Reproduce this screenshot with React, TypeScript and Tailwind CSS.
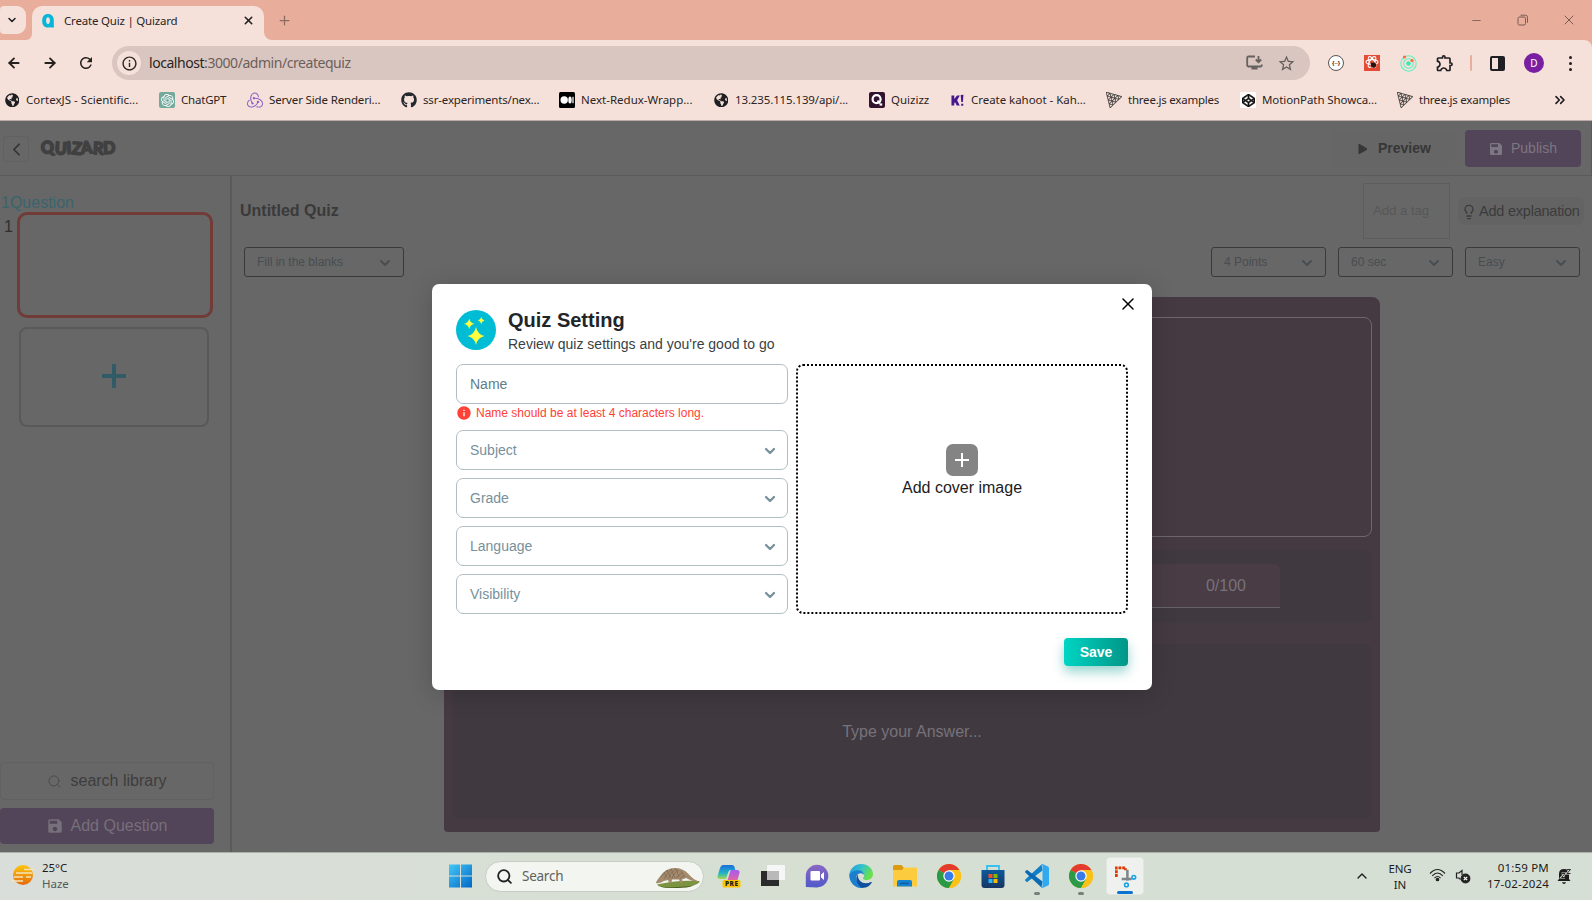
import React from 'react';
import { ArrowLeft, ArrowRight, ChevronDown, ChevronLeft, ChevronUp, ChevronsRight, Lightbulb, Minus, Plus, Search, X } from 'lucide-react';
import { FaCodepen, FaGithub, FaGlobeAmericas } from 'react-icons/fa';
import { SiOpenai, SiRedux, SiThreedotjs } from 'react-icons/si';
import { MdRefresh, MdOutlineInfo, MdOutlineExtension, MdStarBorder, MdSave, MdInfo } from 'react-icons/md';

const segoe = "font-['Noto_Sans',sans-serif]";

function MediumMark() {
  return (
    <svg width="16" height="16" viewBox="0 0 16 16">
      <rect width="16" height="16" rx="1.5" fill="#000" />
      <circle cx="5.2" cy="8" r="3.7" fill="#fff" />
      <ellipse cx="11" cy="8" rx="1.7" ry="3.6" fill="#fff" />
      <rect x="13.4" y="4.8" width="1.2" height="6.4" fill="#fff" />
    </svg>
  );
}

function QuizizzMark() {
  return (
    <svg width="16" height="16" viewBox="0 0 16 16">
      <rect width="16" height="16" rx="2" fill="#32122f" />
      <circle cx="7.6" cy="7.2" r="4" fill="none" stroke="#fff" strokeWidth="2.2" />
      <path d="M8.500 8.500l2.500 3" stroke="#fff" strokeWidth="1.800" />
      <rect x="10.600" y="11.400" width="2.600" height="2.200" fill="#fff" />
    </svg>
  );
}

function KahootMark() {
  return (
    <svg width="13" height="13" viewBox="0 0 14 14" fill="#46178f">
      <path d="M0.5 1.5h3v4l3-4h3L6.6 6.8 9.4 12.5H6.2L4.4 9 3.5 10v2.5h-3zM10.4 1l3-.3-.6 8h-1.7zM11 10.4h2.2v2.2H11z" />
    </svg>
  );
}

const bookmarks: { icon: React.ReactNode; label: string; w: string }[] = [
  { icon: <FaGlobeAmericas size={14.5} color="#1f1f23" />, label: 'CortexJS - Scientific...', w: 'w-[155px] tracking-[0.02px]' },
  { icon: <span className="flex size-4 items-center justify-center rounded-[2px] bg-[#74aa9c]"><SiOpenai size={13} color="#fff" /></span>, label: 'ChatGPT', w: 'w-[88px] tracking-[-0.2px]' },
  { icon: <SiRedux size={16} color="#8a5cc4" />, label: 'Server Side Renderi...', w: 'w-[154px] tracking-[-0.15px]' },
  { icon: <FaGithub size={16} color="#24292f" />, label: 'ssr-experiments/nex...', w: 'w-[158px] tracking-[-0.17px]' },
  { icon: <MediumMark />, label: 'Next-Redux-Wrapp...', w: 'w-[154px] tracking-[0px]' },
  { icon: <FaGlobeAmericas size={14.5} color="#1f1f23" />, label: '13.235.115.139/api/...', w: 'w-[156px] tracking-[-0.13px]' },
  { icon: <QuizizzMark />, label: 'Quizizz', w: 'w-[80px] tracking-[0px]' },
  { icon: <KahootMark />, label: 'Create kahoot - Kah...', w: 'w-[157px] tracking-[-0.04px]' },
  { icon: <SiThreedotjs size={16} color="#2b2b2b" className="stroke-[#2b2b2b] stroke-[0.5]" />, label: 'three.js examples', w: 'w-[134px] tracking-[-0.22px]' },
  { icon: <span className="flex size-4 items-center justify-center rounded-[1px] bg-white"><FaCodepen size={13} color="#111" className="stroke-[#111] stroke-[24]" /></span>, label: 'MotionPath Showca...', w: 'w-[157px] tracking-[-0.08px]' },
  { icon: <SiThreedotjs size={16} color="#2b2b2b" className="stroke-[#2b2b2b] stroke-[0.5]" />, label: 'three.js examples', w: 'w-[134px] tracking-[-0.22px]' },
];

function TabStrip() {
  return (
    <div className="flex h-10 bg-[#e8ad9b]">
      <div className="mt-[6px] flex h-7 w-[26px] items-center justify-center rounded-r-[9px] rounded-l-[4px] bg-[#f6e1da]">
        <ChevronDown size={12} strokeWidth={3} color="#1f1f1f" className="-ml-[2px]" />
      </div>
      <div className="flex w-[6px] items-end bg-[#f6e1da]">
        <div className="h-full w-full rounded-br-[8px] bg-[#e8ad9b]" />
      </div>
      <div className="mt-[6px] flex h-[34px] w-[232px] items-center rounded-t-[10px] bg-[#f6e1da] pr-[9px] pl-[10px] pb-[5px]">
        <svg width="12" height="14" viewBox="0 0 12 14">
          <path d="M6 0C9.600 0 11.800 2.500 11.800 6.500V11L12 13.600H9L8 13.300C3 14.600 .2 11.500 .2 7 .2 2.500 2.400 0 6 0z" fill="#06b6d8" />
          <ellipse cx="6" cy="6.600" rx="1.900" ry="3.400" fill="#f6e1da" />
        </svg>
        <span className="ml-[10px] flex-1 text-[11.500px] tracking-[-0.2px] whitespace-nowrap text-[#2a2523]">Create Quiz | Quizard</span>
        <X size={13} strokeWidth={2.800} color="#1f1f1f" />
      </div>
      <div className="w-[8px] bg-[#f6e1da]">
        <div className="h-full w-full rounded-bl-[8px] bg-[#e8ad9b]" />
      </div>
      <Plus size={15} strokeWidth={2} color="#8d6d63" className="mt-[12.5px] ml-[5px]" />
      <div className="ml-auto flex h-10 items-center pr-[15px] text-[#7a5b52]">
        <Minus size={13} strokeWidth={1.600} />
        <svg width="12" height="12" viewBox="0 0 12 12" fill="none" stroke="currentColor" className="mr-[32px] ml-[34px]">
          <rect x="1" y="3" width="7.500" height="8" rx="1.500" />
          <path d="M3.500 1.200h5a2 2 0 0 1 2 2v5.500" />
        </svg>
        <X size={16} strokeWidth={1.500} />
      </div>
    </div>
  );
}

function Toolbar() {
  return (
    <div className="flex bg-[#e8ad9b]">
      <div className="flex h-[46px] w-full items-center rounded-tr-[8px] bg-[#f6e1da]">
        <div className="flex w-[112px] items-center pl-[6px]">
          <ArrowLeft size={16} strokeWidth={2.700} color="#25211f" />
          <ArrowRight size={16} strokeWidth={2.700} color="#25211f" className="ml-5" />
          <MdRefresh size={18} color="#25211f" className="ml-[19px]" />
        </div>
        <div className="flex h-[34px] w-[1198px] items-center rounded-full bg-[#dac6c0] pl-[5px]">
          <span className="flex size-6 items-center justify-center rounded-full bg-[#f6e1da]">
            <MdOutlineInfo size={17} color="#2b2624" />
          </span>
          <span className="ml-[8px] flex-1 pb-[1px] text-[14px] tracking-[-0.45px] whitespace-nowrap text-[#6b5f5b]"><span className="text-[#2a2523]">localhost</span>:3000/admin/createquiz</span>
          <svg width="17" height="16" viewBox="0 0 17 16" fill="none" stroke="#66605e" strokeWidth="1.800">
            <path d="M9 1.500H2.400A1.200 1.200 0 0 0 1.200 2.700v7.600a1.200 1.200 0 0 0 1.200 1.200h12.200a1.200 1.200 0 0 0 1.200-1.200V9.500M5.500 13.500h6M12.500 1v6M9.800 4.500l2.700 2.700L15.200 4.500" />
          </svg>
          <MdStarBorder size={19} color="#66605e" className="mr-[14px] ml-[14px]" />
        </div>
        <div className="flex flex-1 items-center pl-[18px]">
          <span className="flex size-4 items-center justify-center rounded-full border border-[#555] bg-white text-[6px] font-bold text-[#222]">{'{··}'}</span>
          <svg className="ml-[20px]" width="16" height="16" viewBox="0 0 16 16">
            <rect width="16" height="16" fill="#e34b35" />
            <g fill="none" stroke="#fff" strokeWidth="1.100">
              <ellipse cx="8" cy="7" rx="6" ry="2.400" />
              <ellipse cx="8" cy="7" rx="6" ry="2.400" transform="rotate(60 8 7)" />
              <ellipse cx="8" cy="7" rx="6" ry="2.400" transform="rotate(-60 8 7)" />
            </g>
            <path d="M6.500 7.500l2.500 .5 1-1 2.200 2-.2 2.500-2 1.500-3-1.500z" fill="#26120f" />
          </svg>
          <svg className="ml-[20px]" width="17" height="17" viewBox="0 0 17 17">
            <g fill="none" stroke="#5ff0c0" strokeWidth="1.100">
              <circle cx="8.500" cy="8.500" r="7.700" />
              <circle cx="8.500" cy="8.500" r="4.800" />
            </g>
            <circle cx="8.500" cy="8.500" r="2.300" fill="#3fe8b0" />
            <circle cx="4.500" cy="2" r="1.600" fill="#ff6a3d" />
            <circle cx="12" cy="5.500" r="1.600" fill="#ff6a3d" />
          </svg>
          <MdOutlineExtension size={20} color="#1f1f23" className="ml-[18px]" />
          <span className="ml-[15px] h-4 w-[2px] rounded bg-[#e8ad9b]" />
          <svg className="ml-[18px]" width="15" height="15" viewBox="0 0 15 15">
            <rect x="1" y="1" width="13" height="13" rx="1" fill="none" stroke="#1f1f23" strokeWidth="2" />
            <rect x="8" y="1" width="6" height="13" fill="#1f1f23" />
          </svg>
          <span className="ml-[19px] flex size-5 items-center justify-center rounded-full bg-[#7b1fa2] text-[10px] text-white">D</span>
          <span className="ml-[25px] flex flex-col gap-[3px]">
            <span className="size-[3px] rounded-full bg-[#1f1f23]" />
            <span className="size-[3px] rounded-full bg-[#1f1f23]" />
            <span className="size-[3px] rounded-full bg-[#1f1f23]" />
          </span>
        </div>
      </div>
    </div>
  );
}

function Bookmarks() {
  return (
    <div className="flex h-[35px] items-center border-b border-[#b9aaa5] bg-[#f6e1da] pb-[6px] pl-1 text-[11.5px] text-[#2a2523]">
      {bookmarks.map((b, i) => (
        <div key={i} className={'flex shrink-0 items-center gap-[6px] whitespace-nowrap ' + b.w}>
          <span className="flex w-4 justify-center">{b.icon}</span>
          <span className="-mt-[1px]">{b.label}</span>
        </div>
      ))}
      <ChevronsRight size={16} strokeWidth={2.500} color="#1f1f23" className="ml-[21px]" />
    </div>
  );
}

function DimSelect({ label, w }: { label: string; w: string }) {
  return (
    <div className={'flex h-[30px] items-center justify-between rounded-[3px] border border-[#3a3a3a] pr-[10px] pl-3 text-[12px] text-[#474d50] ' + w}>
      <span>{label}</span>
      <ChevronDown size={16} strokeWidth={2.800} className="mt-[2px]" />
    </div>
  );
}

function Sidebar() {
  return (
    <div className="flex w-[232px] shrink-0 flex-col border-r-2 border-[#5a5a5a]">
      <div className="mt-[17px] pl-[1px] text-[16px] leading-[19px] text-[#3a646d]">1Question</div>
      <div className="flex">
        <span className="w-[17px] pt-[3px] pl-[4px] text-[16px] text-[#2f2f2f]">1</span>
        <div className="h-[106px] w-[196px] rounded-[10px] border-[3px] border-[#713c38]" />
      </div>
      <div className="mt-[9px] ml-[19px] flex h-[100px] w-[190px] items-center justify-center rounded-[8px] border-2 border-[#595959] pb-[2px]">
        <svg width="24" height="24" viewBox="0 0 24 24" fill="#325c65"><path d="M10 0h4v10h10v4H14v10h-4V14H0v-4h10z" /></svg>
      </div>
      <div className="mt-auto mb-2 flex h-[38px] w-[214px] items-center justify-center rounded-[4px] border border-[#616161] text-[16px] text-[#3d3d3d]">
        <Search size={15} strokeWidth={1.500} color="#4a4a4a" className="mr-[8px]" />search library
      </div>
      <div className="mb-2 flex h-9 w-[214px] items-center justify-center rounded-[4px] bg-[#524459] pr-[1px] pb-[1px] text-[16px] text-[#76707a]">
        <MdSave size={18} className="mr-[7px]" />Add Question
      </div>
    </div>
  );
}

function Editor() {
  return (
    <div className="flex flex-1 flex-col">
      <div className="flex h-[71px] items-start pt-[7px] pr-[8px] pl-[8px]">
        <span className="mt-[16px] text-[16px] font-bold text-[#3a3a3a]">Untitled Quiz</span>
        <div className="ml-auto flex h-14 w-[87px] items-center border border-[#5d5d5d] pl-[9px] text-[13.333px] tracking-[-0.1px] text-[#575757]">Add a tag</div>
        <div className="mt-[14px] ml-[8px] flex h-7 w-[126px] items-center rounded-[8px] bg-[#636363] pt-[1px] pl-[3px] text-[14.500px] tracking-[-0.22px] whitespace-nowrap text-[#3b3b3b]">
          <Lightbulb size={16} strokeWidth={2} className="mr-[2px] shrink-0" />Add explanation
        </div>
      </div>
      <div className="flex gap-3 pr-3 pl-3">
        <DimSelect label="Fill in the blanks" w="w-40 mr-auto" />
        <DimSelect label="4 Points" w="w-[115px]" />
        <DimSelect label="60 sec" w="w-[115px]" />
        <DimSelect label="Easy" w="w-[115px]" />
      </div>
      <div className="mt-[20px] ml-[212px] flex h-[535px] w-[936px] flex-col rounded-t-[8px] rounded-b-[4px] bg-[#463a42] px-2 pt-5">
        <div className="h-[220px] rounded-[8px] border border-[#6d676c]" />
        <div className="mt-[13px] flex h-[73px] justify-center rounded-[8px] bg-[#403a40] pt-[14px]">
          <div className="flex h-[44px] w-[736px] items-center justify-end rounded-t-[6px] border-b border-[#64646a] bg-[#493c44] pr-[34px] text-[16px] text-[#77727a]">0/100</div>
        </div>
        <div className="mt-[21px] flex h-[175px] items-center justify-center rounded-[8px] bg-[#403a40] text-[16px] text-[#77727a]">Type your Answer...</div>
      </div>
    </div>
  );
}

function ModalSelect({ label }: { label: string }) {
  return (
    <div className="flex h-10 items-center justify-between rounded-[7px] border border-[#b0bec5] pr-[9px] pl-[13px] text-[14px] text-[#78909c]">
      {label}
      <ChevronDown size={16} strokeWidth={3.500} className="mt-[2px]" />
    </div>
  );
}

function Modal() {
  return (
    <div className="absolute top-[163px] left-[432px] flex h-[406px] w-[720px] flex-col rounded-[7px] bg-white px-6 pt-[26px] font-['Liberation_Sans',Arial,sans-serif] shadow-[0_4px_24px_rgba(0,0,0,0.18)]">
      <X size={20} strokeWidth={1.700} color="#000" className="absolute top-[10px] right-[14px]" />
      <div className="flex h-[54px]">
        <svg width="40" height="40" viewBox="0 0 40 40">
          <circle cx="20" cy="20" r="20" fill="#00bcd4" />
          <g fill="#ffff3d">
            <path d="M20 17Q21.500 24.500 28.500 26Q21.500 27.500 20 35Q18.500 27.500 11.500 26Q18.500 24.500 20 17z" />
            <path d="M13.200 8.500Q14.100 13 18.500 13.800Q14.100 14.600 13.200 19.200Q12.300 14.600 8 13.800Q12.300 13 13.200 8.500z" />
            <path d="M25.200 7Q25.800 9.900 28.500 10.500Q25.800 11.100 25.200 14Q24.600 11.100 22 10.500Q24.600 9.900 25.200 7z" />
          </g>
        </svg>
        <div className="ml-3 flex flex-col">
          <span className="-mt-[2px] text-[20px] leading-6 font-bold text-[#212529]">Quiz Setting</span>
          <span className="mt-[2px] text-[14px] leading-5 text-[#3a3f44]">Review quiz settings and you're good to go</span>
        </div>
      </div>
      <div className="flex gap-2">
        <div className="flex w-[332px] flex-col">
          <div className="flex h-10 items-center rounded-[7px] border border-[#b0bec5] pl-[13px] text-[14px] text-[#607d8b]">Name</div>
          <div className="flex h-[26px] items-start pt-[1px] text-[12px] leading-4 text-[#ff4136]">
            <MdInfo size={16} className="mr-1" />Name should be at least 4 characters long.
          </div>
          <div className="flex flex-col gap-2">
            <ModalSelect label="Subject" />
            <ModalSelect label="Grade" />
            <ModalSelect label="Language" />
            <ModalSelect label="Visibility" />
          </div>
        </div>
        <div className="flex h-[250px] w-[332px] flex-col items-center rounded-[7px] border-2 border-dotted border-black pt-[78px]">
          <span className="flex size-8 items-center justify-center rounded-[7px] bg-[#848484]">
            <svg width="14" height="14" viewBox="0 0 14 14" stroke="#fff" strokeWidth="2"><path d="M7 0v14M0 7h14" /></svg>
          </span>
          <span className="text-[16px] leading-6 text-[#1c1c1c]">Add cover image</span>
        </div>
      </div>
      <div className="mt-6 flex h-7 w-16 items-center justify-center self-end rounded-[4px] bg-linear-to-r from-[#00d5c3] to-[#009688] text-[14px] font-bold text-white shadow-[0_6px_12px_rgba(0,150,136,0.4)]">Save</div>
    </div>
  );
}

function Page() {
  return (
    <div className="relative flex h-[731px] flex-col bg-[#676767] font-['Liberation_Sans',Arial,sans-serif]">
      <div className="flex h-[55px] items-start border-r border-b border-[#5a5a5a] pr-[10px] pl-[3px]">
        <div className="mt-[15px] flex size-[26px] items-center justify-center rounded-[4px] border border-[#616161]">
          <ChevronLeft size={21} strokeWidth={2} color="#333" className="shrink-0" />
        </div>
        <svg width="84" height="28" viewBox="0 0 84 28" className="mt-[12px] ml-[8px]">
          <text x="4.500" y="21" textLength="74" lengthAdjust="spacingAndGlyphs" fontFamily="Lato" fontWeight="900" fontSize="17" fill="#404040" stroke="#404040" strokeWidth="1.600" strokeLinejoin="round" rotate="-6 4 -3 5 -4 3 -2">QUIZARD</text>
        </svg>
        <div className="mt-[9px] mr-[10px] ml-auto flex h-[37px] w-[123px] items-center rounded-[4px] bg-[#666] pb-[1px] pl-[26px] text-[14px] font-bold text-[#373737]">
          <svg width="10" height="12" viewBox="0 0 10 12" fill="#373737" className="mt-[1px] mr-[10px]"><path d="M1 1.200L8.500 5.400q.8 .6 0 1.200L1 10.800z" stroke="#373737" /></svg>
          Preview
        </div>
        <div className="mt-[9px] flex h-[37px] w-[116px] items-center rounded-[4px] bg-[#524459] pl-[23px] text-[14px] text-[#7d7781]">
          <MdSave size={16} className="mr-[7px]" /><span className="pb-[1px]">Publish</span>
        </div>
      </div>
      <div className="flex flex-1">
        <Sidebar />
        <Editor />
      </div>
      <Modal />
    </div>
  );
}

function ChromeIcon() {
  return (
    <svg width="24" height="24" viewBox="0 0 24 24">
      <circle cx="12" cy="12" r="12" fill="#fbc116" />
      <path d="M12 12L1.600 6A12 12 0 0 1 22.400 6H12z" fill="#e33b2e" />
      <path d="M12 12L1.600 6A12 12 0 0 0 12 24L17.200 15z" fill="#2a9a47" />
      <path d="M12 6.500H22.700A12 12 0 0 1 12 24L17 15z" fill="#fbc116" />
      <circle cx="12" cy="12" r="5.700" fill="#fff" />
      <circle cx="12" cy="12" r="4.500" fill="#3a7bea" />
    </svg>
  );
}

function WindowsIcon() {
  return (
    <svg width="24" height="24" viewBox="0 0 24 24">
      <defs><linearGradient id="win" x1="0" y1="0" x2="1" y2="1"><stop offset="0" stopColor="#43c8f7" /><stop offset="1" stopColor="#0067c8" /></linearGradient></defs>
      <path d="M0 .500h11v11H0zM12 .500h11v11H12zM0 12.500h11v11H0zM12 12.500h11v11H12z" fill="url(#win)" />
    </svg>
  );
}

function Pangolin() {
  return (
    <svg width="46" height="24" viewBox="0 0 46 24">
      <path d="M2 19.500q20-5 42-3.500 2 1-2 3-4 3-20 3.500Q4 23.500 2 19.500z" fill="#7c9440" />
      <path d="M5 21.500q14 2 34-1-6 2.500-17 2.500-13 0-17-1.500z" fill="#48601f" />
      <path d="M1 17.500q1-2.500 3.500-5.500Q10 3.500 19 3 27 2.500 33 8.500q5 6 11 8-6 .5-13-3.500-3 1-4 1.500l1 3.500h-2.500l-1.500-3.500H17l-.5 3.500H14l-1-3-4 1q-5 3-8 2z" fill="#a58b6e" />
      <path d="M6 12q4-6 7-7m-4 9q3-7 8-10m-4 10q2-7 8-10m-4 10q1-6 7-9m-3 9q2-4 6-6m-2 6q1-3 5-3M9 8l3 4m0-7l4 8m0-9l4 9m1-9l3 8m2-6l3 5" fill="none" stroke="#75604a" strokeWidth=".6" />
    </svg>
  );
}

function CopilotIcon() {
  return (
    <svg width="24" height="24" viewBox="0 0 24 24">
      <defs>
        <linearGradient id="cpa" x1="0" y1="0" x2="0" y2="1"><stop offset="0" stopColor="#1a6fe0" /><stop offset=".6" stopColor="#23b7c4" /><stop offset="1" stopColor="#a8d64a" /></linearGradient>
        <linearGradient id="cpb" x1="0" y1="0" x2="0" y2="1"><stop offset="0" stopColor="#a45cf0" /><stop offset="1" stopColor="#f2688f" /></linearGradient>
      </defs>
      <path d="M6 1h9q2 0 2.500 2l.8 3H14q-2 0-2.700 2L9 15H3Q0 15 .6 12L3 4Q4 1 6 1z" fill="url(#cpa)" />
      <path d="M14 6h6q3 0 2.500 3l-2 7q-1 3-4 3H8q2-1 2.600-3L13 8q.3-1 1-2z" fill="url(#cpb)" />
      <rect x="5.500" y="16" width="18" height="7.500" rx="1.500" fill="#fdc500" />
      <text x="8" y="22.200" textLength="13" fontFamily="Open Sans" fontWeight="800" fontSize="6.500" fill="#222">PRE</text>
    </svg>
  );
}

function TaskViewIcon() {
  return (
    <svg width="24" height="24" viewBox="0 0 24 24">
      <rect x="0" y="7" width="18" height="15" fill="#2b2b2b" />
      <rect x="6" y="1" width="18" height="15" rx="1" fill="#f6f6f6" />
      <rect x="6" y="7" width="12" height="9" fill="#b9b9b9" />
    </svg>
  );
}

function ChatIcon() {
  return (
    <svg width="24" height="24" viewBox="0 0 24 24">
      <defs><linearGradient id="cht" x1="0" y1="0" x2="0" y2="1"><stop offset="0" stopColor="#8a67c4" /><stop offset="1" stopColor="#5059c9" /></linearGradient></defs>
      <path d="M12 .8A11.300 11.300 0 1 1 12 23.400L.8 23V12A11.300 11.300 0 0 1 12 .8z" fill="url(#cht)" />
      <rect x="5.500" y="7" width="9.500" height="9.500" rx="1" fill="#fff" />
      <path d="M16 10.500l3-2.500v8l-3-2.500z" fill="#fff" />
    </svg>
  );
}

function EdgeIcon() {
  return (
    <svg width="24" height="24" viewBox="0 0 24 24">
      <defs>
        <linearGradient id="eda" x1="0" y1="0" x2="1" y2=".4"><stop offset="0" stopColor="#2196dc" /><stop offset=".5" stopColor="#2fc0d0" /><stop offset="1" stopColor="#6be04a" /></linearGradient>
      </defs>
      <path d="M.3 10.500C1.200 4.500 6 0 12.300 0 19 0 24 4.700 24 10c0 3.800-2.800 6-6 6-2.500 0-4-.8-4-1.800 0-.7 1.200-1.200 1.200-3C15.200 8.600 12.700 7 9.500 7 5 7 1.500 8.500.3 10.500z" fill="url(#eda)" />
      <path d="M.2 11.500C0 9 4.500 5.800 9.500 6.200c3.500.3 5.700 2.500 5.700 5-1-1.700-3-2.400-5-1.600C6 11.300 6.500 17 10.500 20.500c1.500 1.300 3 2.300 4.500 3-7.500 2-14.300-3.700-14.800-12z" fill="#1b7fd0" />
      <path d="M8.800 10.500C6 14.500 7.500 20 12 23.500c4.500 1 8.500-1 10.700-4.800.4-.6-.2-1-.8-.7-6 3-13.300.5-13.100-7.500z" fill="#0f4f9e" />
    </svg>
  );
}

function ExplorerIcon() {
  return (
    <svg width="24" height="24" viewBox="0 0 24 24">
      <path d="M0 2.500Q0 1 1.500 1h7L11 4v5H0z" fill="#dc9a10" />
      <path d="M0 6h9l2-2.500h12.500q.5 0 .5.500v18.500H0z" fill="#fdcb3e" />
      <path d="M4 22.500V18q0-2 2-2h11q2 0 2 2v4.500z" fill="#1583d0" />
      <rect x="7" y="18.500" width="9" height="1.800" rx=".9" fill="#0d5fa8" />
    </svg>
  );
}

function StoreIcon() {
  return (
    <svg width="24" height="24" viewBox="0 0 24 24">
      <defs><linearGradient id="sto" x1="0" y1="0" x2="0" y2="1"><stop offset="0" stopColor="#0c5a9c" /><stop offset="1" stopColor="#173561" /></linearGradient></defs>
      <path d="M6 7V2h12v5" fill="none" stroke="#35c1f1" strokeWidth="1.800" />
      <path d="M.5 6h23v15q0 3-3 3h-17q-3 0-3-3z" fill="url(#sto)" />
      <path d="M7.500 10h4v4h-4z" fill="#f25022" /><path d="M12.500 10h4v4h-4z" fill="#7fba00" />
      <path d="M7.500 15h4v4h-4z" fill="#29b6f6" /><path d="M12.500 15h4v4h-4z" fill="#ffb900" />
    </svg>
  );
}

function CodeIcon() {
  return (
    <svg width="24" height="24" viewBox="0 0 24 24">
      <path d="M17.500 6.500L2.600 17.800q-.6.400-1.200 0L.3 16.700q-.5-.6 0-1.200L16.500.500z" fill="#0f7fc9" />
      <path d="M17.500 17.500L2.600 6.200q-.6-.4-1.200 0L.3 7.300q-.5.600 0 1.200L16.500 23.500z" fill="#0a6ab5" />
      <path d="M17.500 0L23 2.500q1 .5 1 1.500v16q0 1-1 1.500L17.500 24q-1 0-1.500-1 1.500.5 1.500-1V2q0-1.500-1.500-1 .5-1 1.500-1z" fill="#30a8f2" />
    </svg>
  );
}

function SnipIcon() {
  return (
    <svg width="24" height="24" viewBox="0 0 24 24">
      <path d="M3 12.500V3h9.500v2.500" fill="none" stroke="#d83b01" strokeWidth="2.800" strokeDasharray="3 .9" />
      <path d="M14.500 5v11.500M8.500 14.500H19" stroke="#7d858a" strokeWidth="2.600" fill="none" />
      <circle cx="21.200" cy="12.800" r="1.900" fill="#fff" stroke="#1aa3e8" strokeWidth="1.700" />
      <circle cx="13.500" cy="20.800" r="1.900" fill="#fff" stroke="#1aa3e8" strokeWidth="1.700" />
    </svg>
  );
}

function Taskbar() {
  const slot = 'flex h-full w-11 shrink-0 flex-col items-center pt-[11px]';
  return (
    <div className="flex h-12 border-t border-[#aab1a8] bg-linear-to-r from-[#dadeda] via-[#d6dfd2] to-[#d6dfd5] text-[#1c1c1c]">
      <div className="flex w-[439px] pt-[7px] pl-[11px]">
        <svg width="24" height="24" viewBox="0 0 24 24" className="mt-[3px]">
          <defs><linearGradient id="sun" x1="0" y1="0" x2="0" y2="1"><stop offset="0" stopColor="#fdc60a" /><stop offset="1" stopColor="#e5690c" /></linearGradient></defs>
          <circle cx="12" cy="12" r="10" fill="url(#sun)" />
          <path d="M13 6.500h11M5 10h16M3 14h9M15 14h5M0 18h12" stroke="#f3e4ba" strokeWidth="1.400" />
        </svg>
        <div className="ml-[7px] flex flex-col text-[11.500px] leading-4 tracking-[-0.03px]"><span>25°C</span><span className="text-[#555a55]">Haze</span></div>
      </div>
      <div className={slot}><WindowsIcon /></div>
      <div className="mt-[8px] ml-[2px] flex h-[31px] w-[219px] items-center rounded-full border border-[#c6cdc3] bg-[#f3f5f1] pl-[10px]">
        <Search size={17} strokeWidth={2.600} color="#222" />
        <span className="ml-[9px] flex-1 text-[13.500px] tracking-[-0.25px] text-[#5e625e]">Search</span>
        <span className="mr-[2px]"><Pangolin /></span>
      </div>
      <div className="ml-[3px] flex">
        <div className={slot}><CopilotIcon /></div>
        <div className={slot}><TaskViewIcon /></div>
        <div className={slot}><ChatIcon /></div>
        <div className={slot}><EdgeIcon /></div>
        <div className={slot}><ExplorerIcon /></div>
        <div className={slot}><ChromeIcon /></div>
        <div className={slot}><StoreIcon /></div>
        <div className={slot}><CodeIcon /><span className="mt-[4px] h-[3px] w-[6px] rounded-full bg-[#7b7f7b]" /></div>
        <div className={slot}><ChromeIcon /><span className="mt-[4px] h-[3px] w-[6px] rounded-full bg-[#7b7f7b]" /></div>
        <div className="mt-[4px] ml-[3px] flex h-[38px] w-[38px] flex-col items-center rounded-[4px] border border-[#e2e6e1] bg-[#eff1ef] pt-[7px]">
          <SnipIcon /><span className="mt-[3px] h-[3px] w-4 shrink-0 rounded-full bg-[#0a74d1]" />
        </div>
      </div>
      <div className="ml-auto flex items-start text-[11.500px] leading-4">
        <ChevronUp size={16} strokeWidth={2} className="mt-[15px]" />
        <div className="mt-[8px] ml-[11px] flex w-[38px] flex-col items-center tracking-[-0.1px]"><span>ENG</span><span>IN</span></div>
        <svg width="17" height="14" viewBox="0 0 17 14" className="mt-[15px] ml-[10px]" fill="none" stroke="#222" strokeWidth="1.100">
          <path d="M1 5.500q7.500-8 15 0M3.200 7.800q5.300-5.500 10.600 0M5.500 10q3-3 6 0" />
          <circle cx="8.500" cy="11.500" r="1.300" fill="#222" />
        </svg>
        <svg width="16" height="15" viewBox="0 0 16 15" className="mt-[16px] ml-[9px]" fill="none" stroke="#222" strokeWidth="1.200">
          <path d="M7 6V1.500L4 4H1.500v5H4l1.500 1.500" />
          <circle cx="10.500" cy="9.500" r="4.300" fill="#222" />
          <path d="M8.800 7.800l3.400 3.400M12.200 7.800l-3.400 3.400" stroke="#fff" />
        </svg>
        <div className="mt-[7px] ml-[13px] flex w-[65px] flex-col items-end tracking-[0.2px] whitespace-nowrap"><span>01:59 PM</span><span>17-02-2024</span></div>
        <svg width="15" height="17" viewBox="0 0 15 17" className="mt-[15px] mr-[20px] ml-[8px]">
          <path d="M2 6q0-5 5-5 5 0 5 5v5l1.500 2H.5L2 11z" fill="#1c1c1c" />
          <path d="M5 14.200h4q-.5 1.800-2 1.800t-2-1.800z" fill="#1c1c1c" />
          <path d="M4.500 5.500H8l-3.500 4H8M10 1.500h3.500L10 5.500h3.500" fill="none" stroke="#d6dfd2" strokeWidth="2.200" />
          <path d="M4.500 5.500H8l-3.500 4H8M10 1.500h3.500L10 5.500h3.500" fill="none" stroke="#1c1c1c" strokeWidth=".9" />
        </svg>
      </div>
    </div>
  );
}

export default function App() {
  return (
    <div className={'h-[900px] w-[1592px] overflow-hidden ' + segoe}>
      <TabStrip />
      <Toolbar />
      <Bookmarks />
      <Page />
      <Taskbar />
    </div>
  );
}
